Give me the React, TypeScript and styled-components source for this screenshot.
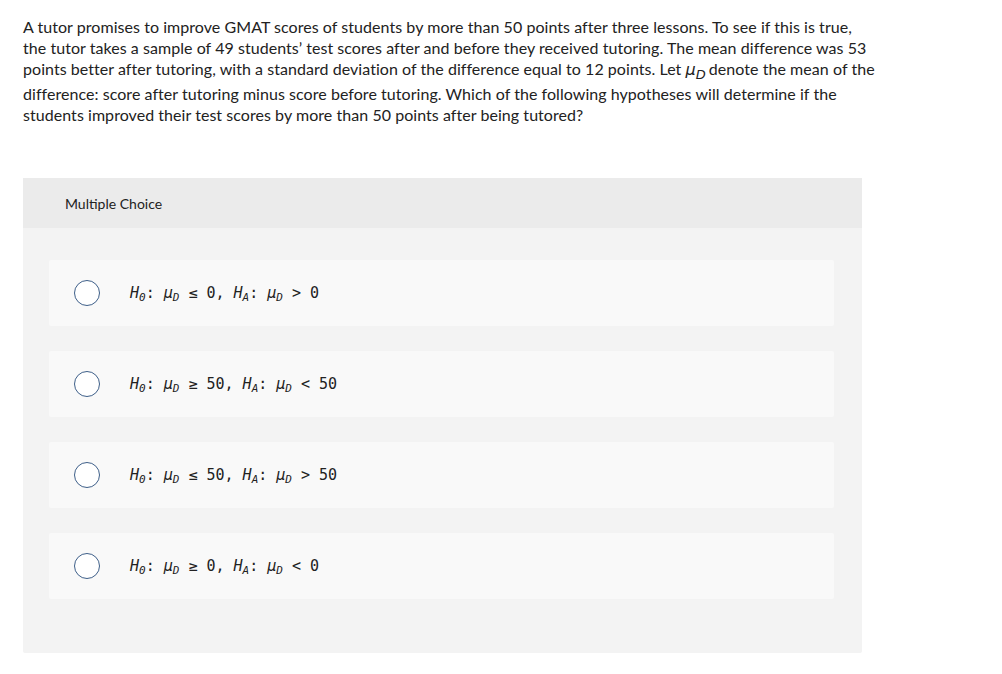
import React from "react";
import styled, { createGlobalStyle } from "styled-components";

const Global = createGlobalStyle`
  html, body { margin: 0; padding: 0; background: #ffffff; }
  body { font-family: Lato, "Open Sans", sans-serif; color: #222222; }
`;

const Page = styled.div`
  padding: 16px 23px 0 23px;
  width: 860px;
`;

const Question = styled.p`
  margin: 0;
  font-size: 16px;
  line-height: 21px;
  letter-spacing: 0.05px;
  color: #222;
  white-space: nowrap;
`;

const Mu = styled.span`
  font-style: italic;
  font-family: "DejaVu Sans", sans-serif;
  font-size: 16px;
  margin-right: 3px;
  & > sub {
    font-size: 13px;
    line-height: 16px;
    vertical-align: -4px;
  }
`;

const Card = styled.section`
  margin-top: 53px;
  width: 839px;
  background: #f3f3f3;
  border-radius: 2px;
  padding-bottom: 54px;
`;

const CardHeader = styled.div`
  height: 50px;
  background: #ebebeb;
  display: flex;
  align-items: center;
  padding-left: 42px;
  font-size: 14px;
  color: #222;
`;

const Options = styled.div`
  display: flex;
  flex-direction: column;
  gap: 25px;
  padding: 32px 28px 0 26px;
`;

const Option = styled.label`
  height: 66px;
  background: #f9f9f9;
  border-radius: 2px;
  display: flex;
  align-items: center;
  padding-left: 25px;
`;

const Radio = styled.span`
  width: 24px;
  height: 24px;
  border-radius: 50%;
  border: 1.6px solid #3e5f89;
  background: #fff;
  flex: none;
`;

const Formula = styled.span`
  margin-left: 30px;
  font-family: "DejaVu Sans Mono", monospace;
  font-size: 15px;
  color: #222;
  white-space: pre;
  & i { font-style: italic; }
  & sub {
    font-size: 11px;
    vertical-align: -3px;
    line-height: 0;
    font-style: italic;
  }
`;

type Hyp = { rel0: string; val0: string; relA: string; valA: string };

const hyps: Hyp[] = [
  { rel0: "≤", val0: "0", relA: ">", valA: "0" },
  { rel0: "≥", val0: "50", relA: "<", valA: "50" },
  { rel0: "≤", val0: "50", relA: ">", valA: "50" },
  { rel0: "≥", val0: "0", relA: "<", valA: "0" },
];

export default function App() {
  return (
    <>
      <Global />
      <Page>
        <Question>
          A tutor promises to improve GMAT scores of students by more than 50 points after three lessons. To see if this is true,
          <br />
          the tutor takes a sample of 49 students’ test scores after and before they received tutoring. The mean difference was 53
          <br />
          points better after tutoring, with a standard deviation of the difference equal to 12 points. Let{" "}
          <Mu>
            μ<sub>D</sub>
          </Mu>
          denote the mean of the
          <br />
          difference: score after tutoring minus score before tutoring. Which of the following hypotheses will determine if the
          <br />
          students improved their test scores by more than 50 points after being tutored?
        </Question>
        <Card>
          <CardHeader>Multiple Choice</CardHeader>
          <Options>
            {hyps.map((h, i) => (
              <Option key={i}>
                <Radio />
                <Formula>
                  <i>H</i>
                  <sub>0</sub>: <i>μ</i>
                  <sub>D</sub> {h.rel0} {h.val0}, <i>H</i>
                  <sub>A</sub>: <i>μ</i>
                  <sub>D</sub> {h.relA} {h.valA}
                </Formula>
              </Option>
            ))}
          </Options>
        </Card>
      </Page>
    </>
  );
}
